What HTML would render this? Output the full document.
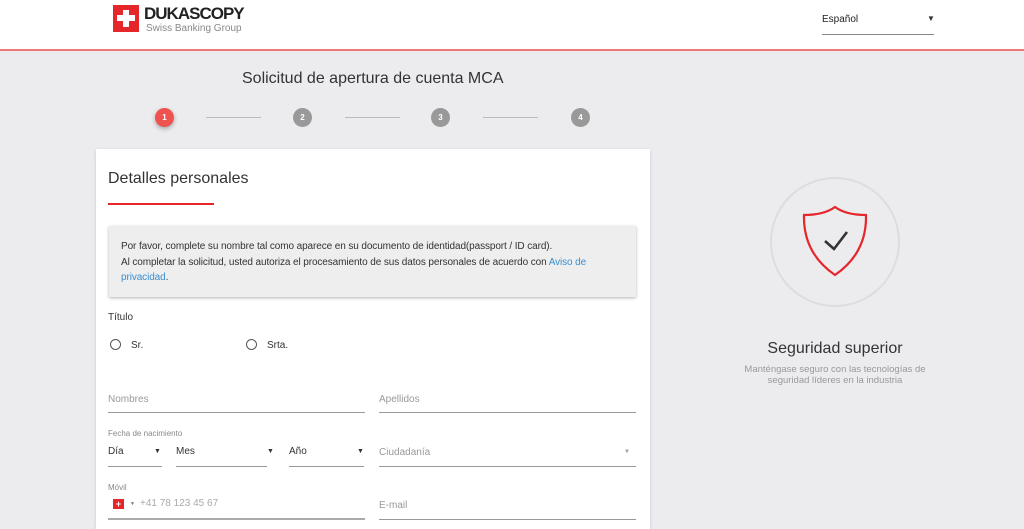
<!DOCTYPE html><html><head><meta charset="utf-8"><style>
*{box-sizing:border-box;margin:0;padding:0}
body{width:1024px;height:521px;overflow:hidden;background:#ececef;font-family:"Liberation Sans",sans-serif;color:#333;position:relative}
.a{position:absolute}
.hdr{left:0;top:0;width:1024px;height:51px;background:#fff;border-bottom:2px solid #e77}
.step{width:19px;height:19px;border-radius:50%;background:#999;color:#fff;font-size:8px;font-weight:bold;text-align:center;line-height:19px}
.ln{height:1px;background:#bbb;width:55px}
.card{left:96px;top:149px;width:554px;height:380px;background:#fff;box-shadow:0 1px 3px rgba(0,0,0,.15)}
.lbl{font-size:10px;color:#888}
.ul{border-bottom:1px solid #999}
.f{font-size:10px;color:#333}
.ph{font-size:10px;color:#999}
</style></head><body>
<div class="a hdr"></div>
<div class="a" style="left:113px;top:5px;width:26px;height:27px;background:#e5262b"></div>
<div class="a" style="left:123px;top:10px;width:6px;height:17px;background:#fff"></div>
<div class="a" style="left:117px;top:15px;width:18px;height:6px;background:#fff"></div>
<div class="a" style="left:144px;top:4px;font-size:17px;font-weight:bold;color:#222;letter-spacing:-1px">DUKASCOPY</div>
<div class="a" style="left:146px;top:23px;font-size:10px;color:#888">Swiss Banking Group</div>
<div class="a" style="left:822px;top:14px;font-size:10px;color:#222">Español</div>
<div class="a" style="left:927px;top:14px;font-size:8px">▼</div>
<div class="a" style="left:822px;top:34px;width:112px;height:1px;background:#888"></div>
<div class="a" style="left:242px;top:70px;font-size:16px;color:#333">Solicitud de apertura de cuenta MCA</div>
<div class="a step" style="left:155px;top:108px;background:#ef5350;box-shadow:0 2px 5px rgba(0,0,0,.3)">1</div>
<div class="a ln" style="left:206px;top:117px"></div>
<div class="a step" style="left:293px;top:108px">2</div>
<div class="a ln" style="left:345px;top:117px"></div>
<div class="a step" style="left:431px;top:108px">3</div>
<div class="a ln" style="left:483px;top:117px"></div>
<div class="a step" style="left:571px;top:108px">4</div>
<div class="a card"></div>
<div class="a" style="left:108px;top:170px;font-size:16px;color:#333">Detalles personales</div>
<div class="a" style="left:108px;top:203px;width:106px;height:2px;background:#e5262b"></div>
<div class="a" style="left:109px;top:226px;width:527px;height:71px;background:#eee;box-shadow:0 1px 3px rgba(0,0,0,.3);padding:13px 12px;font-size:10px;line-height:15.5px;color:#333;letter-spacing:-0.1px">Por favor, complete su nombre tal como aparece en su documento de identidad(passport / ID card).<br>Al completar la solicitud, usted autoriza el procesamiento de sus datos personales de acuerdo con <span style="color:#3a8fd0">Aviso de<br>privacidad</span>.</div>
<div class="a f" style="left:108px;top:312px">Título</div>
<div class="a" style="left:110px;top:339px;width:11px;height:11px;border:1.5px solid #555;border-radius:50%"></div>
<div class="a f" style="left:131px;top:340px">Sr.</div>
<div class="a" style="left:246px;top:339px;width:11px;height:11px;border:1.5px solid #555;border-radius:50%"></div>
<div class="a f" style="left:267px;top:340px">Srta.</div>
<div class="a ph" style="left:108px;top:394px">Nombres</div>
<div class="a ul" style="left:108px;top:412px;width:257px"></div>
<div class="a ph" style="left:379px;top:394px">Apellidos</div>
<div class="a ul" style="left:379px;top:412px;width:257px"></div>
<div class="a lbl" style="left:108px;top:429px;font-size:8px">Fecha de nacimiento</div>
<div class="a f" style="left:108px;top:446px">Día</div><div class="a" style="left:154px;top:448px;font-size:7px">▼</div>
<div class="a ul" style="left:108px;top:466px;width:54px"></div>
<div class="a f" style="left:176px;top:446px">Mes</div><div class="a" style="left:267px;top:448px;font-size:7px">▼</div>
<div class="a ul" style="left:176px;top:466px;width:91px"></div>
<div class="a f" style="left:289px;top:446px">Año</div><div class="a" style="left:357px;top:448px;font-size:7px">▼</div>
<div class="a ul" style="left:289px;top:466px;width:75px"></div>
<div class="a ph" style="left:379px;top:447px">Ciudadanía</div><div class="a" style="left:624px;top:449px;font-size:6px;color:#999">▼</div>
<div class="a ul" style="left:379px;top:466px;width:257px"></div>
<div class="a lbl" style="left:108px;top:483px;font-size:8px">Móvil</div>
<div class="a" style="left:113px;top:499px;width:11px;height:10px;background:#e5262b;color:#fff;font-size:9px;line-height:10px;text-align:center;font-weight:bold">+</div>
<div class="a" style="left:130px;top:501px;font-size:5px;color:#777">▼</div>
<div class="a ph" style="left:140px;top:498px;color:#aaa">+41 78 123 45 67</div>
<div class="a" style="left:108px;top:518px;width:257px;height:2px;background:#aaa"></div>
<div class="a ph" style="left:379px;top:500px">E-mail</div>
<div class="a ul" style="left:379px;top:519px;width:257px"></div>
<div class="a" style="left:770px;top:177px;width:130px;height:130px;border-radius:50%;border:2px solid #ddd;background:#ececef"></div>
<svg class="a" style="left:800px;top:205px" width="70" height="72" viewBox="0 0 70 72"><path d="M35 2 Q24 10 4 10 Q3 48 35 70 Q67 48 66 10 Q46 10 35 2 Z" fill="none" stroke="#e5262b" stroke-width="2.2"/><path d="M25 36 L34 44 L47 27" fill="none" stroke="#333" stroke-width="2.6"/></svg>
<div class="a" style="left:700px;top:340px;width:270px;text-align:center;font-size:16px;color:#333">Seguridad superior</div>
<div class="a" style="left:735px;top:364px;width:200px;text-align:center;font-size:9.5px;line-height:11px;color:#999">Manténgase seguro con las tecnologías de seguridad líderes en la industria</div>
</body></html>
